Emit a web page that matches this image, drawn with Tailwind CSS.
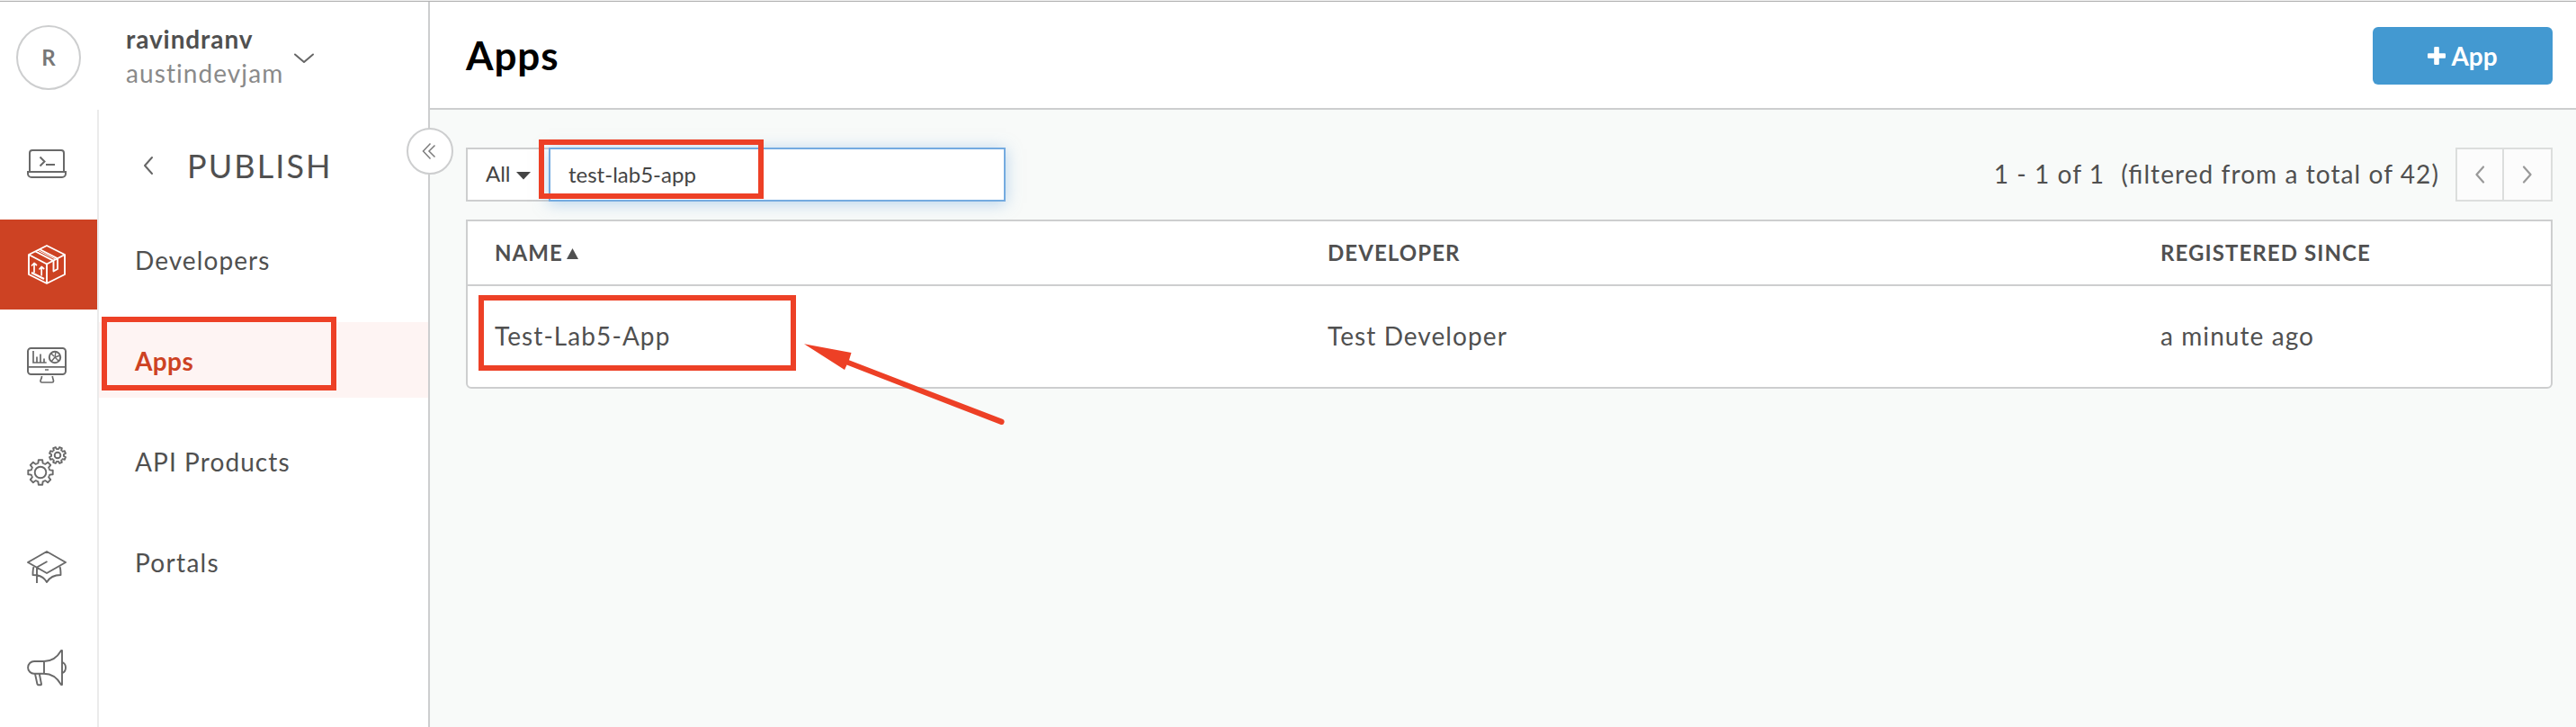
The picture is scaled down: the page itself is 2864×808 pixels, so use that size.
<!DOCTYPE html>
<html lang="en">
<head>
<meta charset="utf-8">
<title>Apps</title>
<script src="https://cdn.jsdelivr.net/npm/@tailwindcss/browser@4"></script>
</head>
<body class="relative flex h-[808px] w-[2864px] flex-col overflow-hidden bg-white font-['Lato',sans-serif] text-[28px] leading-[34px] tracking-[1.08px] text-[#505050]">
  <div class="h-[2px] shrink-0 border-b border-[#b2b2b2] bg-[#f0f0f0]"></div>
  <div class="flex min-h-0 flex-1">

    <!-- Sidebar -->
    <aside class="relative flex w-[478px] shrink-0 flex-col border-r-2 border-[#cdcecf] bg-white">
      <div class="flex h-[120px] shrink-0 items-center pl-[18px]">
        <div class="mt-1 flex size-[72px] items-center justify-center rounded-full border-2 border-[#cdcecf] pb-px text-2xl font-bold tracking-normal text-[#777]">R</div>
        <div class="ml-[50px] leading-[38px]">
          <div class="font-bold tracking-[0.9px]">ravindranv</div>
          <div class="text-[#8a8a8a]">austindevjam</div>
        </div>
        <svg class="mt-[5px] ml-[11px] h-[12px] w-[24px]" viewBox="0 0 24 12" fill="none" stroke="#666" stroke-width="2" stroke-linecap="round" stroke-linejoin="round"><path d="M2 1.500l10 8.500 10-8.500"/></svg>
      </div>

      <div class="flex min-h-0 flex-1">
        <nav class="flex w-[110px] shrink-0 flex-col gap-3 border-r-2 border-[#ebebeb] pt-[10px]">
          <a class="flex h-[100px] shrink-0 items-center pl-[30px]">
            <svg class="size-[44px]" viewBox="0 0 44 44" fill="none" stroke="#696969" stroke-width="2">
              <path d="M3 31V10a3 3 0 0 1 3-3h32a3 3 0 0 1 3 3v21M1 31h42v2a4 4 0 0 1-4 4H5a4 4 0 0 1-4-4zM14.500 14.500l5 5-5 5M21 23h10"/>
            </svg>
          </a>
          <a class="flex h-[100px] w-[108px] shrink-0 items-center bg-[#cd4223] pl-[30px]">
            <svg class="size-[44px]" viewBox="0 0 44 44" fill="none" stroke="#fff" stroke-width="1.900" stroke-linejoin="round">
              <path d="M22 1L42 11v22L22 43 2 33V11zM2 11l20 10.500L42 11M22 21.500V43"/>
              <path d="M9.500 7.500l20 10.300V29.500l4.500-2.500V15.300L14 5" />
              <path d="M12 6.200l19.500 10" stroke-width="1"/>
              <path d="M8 31V21M5 23.500L8 20.500l3 2.500M16.200 34.500V25M13.500 27.500l2.700-3 3 2.500" stroke-width="1.700"/>
              <path d="M5 31l14 7" stroke-width="2.200"/>
            </svg>
          </a>
          <a class="flex h-[100px] shrink-0 items-center pl-[30px]">
            <svg class="size-[44px]" viewBox="0 0 44 44" fill="none" stroke="#696969" stroke-width="2">
              <rect x="1" y="3" width="42" height="29" rx="3.500"/>
              <path d="M1 23.800h42M20 27h4M16.500 34c0 3-1.500 4-1.500 5.500 0 1 .5 1.500 1.500 1.500h11.500c1 0 1.500-.5 1.500-1.500 0-1.500-1-2.500-1.200-5.500" stroke-width="1.700"/>
              <path d="M7 6v13h14.700M11 19v-6.500M15 19V9.500M19 19v-4.500" stroke-width="1.700"/>
              <circle cx="31" cy="13" r="6.200"/>
              <path d="M31 13l1-6M31 13l6-2M31 13l-4 5M31 13l4.500 4.500M30 12l-3.500-3.500" stroke-width="1.400"/>
            </svg>
          </a>
          <a class="flex h-[100px] shrink-0 items-center pl-[30px]">
            <svg class="size-[44px]" viewBox="0 0 44 44" fill="none" stroke="#696969" stroke-width="1.900" stroke-linejoin="round">
              <defs>
                <path id="tooth" d="M-4-9.700L-2.600-10.300-2.200-13.700H2.200L2.600-10.300 4-9.700" vector-effect="non-scaling-stroke"/>
                <g id="gear">
                  <use href="#tooth"/><use href="#tooth" transform="rotate(45)"/><use href="#tooth" transform="rotate(90)"/><use href="#tooth" transform="rotate(135)"/>
                  <use href="#tooth" transform="rotate(180)"/><use href="#tooth" transform="rotate(225)"/><use href="#tooth" transform="rotate(270)"/><use href="#tooth" transform="rotate(315)"/>
                </g>
              </defs>
              <use href="#gear" transform="translate(15 29)"/>
              <circle cx="15" cy="29" r="6.300"/>
              <use href="#gear" transform="translate(34 10) rotate(22.500) scale(.66)"/>
              <circle cx="34" cy="10" r="3.300"/>
            </svg>
          </a>
          <a class="flex h-[100px] shrink-0 items-center pl-[30px]">
            <svg class="size-[44px]" viewBox="0 0 44 44" fill="none" stroke="#696969" stroke-width="1.900" stroke-linejoin="round">
              <path d="M1 17L22 5l21 12-21 12zM22.500 16L11 22.500V40M7.500 22c-.8 2-1 5-1 9 2 0 3 0 4.500.3 5 1 9 4.200 11 7.700 3-5 8-8 15.500-8 0-4 0-7-1-9"/>
            </svg>
          </a>
          <a class="flex h-[100px] shrink-0 items-center pl-[30px]">
            <svg class="size-[44px]" viewBox="0 0 44 44" fill="none" stroke="#696969" stroke-width="1.900" stroke-linejoin="round">
              <path d="M19 15H8a6.900 6.900 0 0 0 0 13.800h11zC27 15 34 10 38 3h1v38h-1C34 34 27 28.800 19 28.800M39.500 16c2 1 3.500 3 3.500 6s-1.500 5-3.500 6M9 29l2.500 11.500c.2.500.5.700 1 .7h2.800c.6 0 .8-.4.700-.9L13.800 29"/>
            </svg>
          </a>
        </nav>

        <nav class="flex flex-1 flex-col">
          <div class="flex h-[124px] shrink-0 items-center pl-[49px] text-4xl leading-[44px] tracking-[2.1px]">
            <svg class="h-[22px] w-[12px]" viewBox="0 0 12 22" fill="none" stroke="#666" stroke-width="2" stroke-linecap="round" stroke-linejoin="round"><path d="M10 2L2 11l8 9"/></svg>
            <span class="ml-[37px]">PUBLISH</span>
          </div>
          <div class="flex flex-col gap-7">
            <a class="flex h-[84px] items-center pt-[2px] pl-10">Developers</a>
            <a class="flex h-[84px] items-center bg-[#fef4f3] pt-[2px] pl-10 font-bold tracking-[0.4px] text-[#cd4223]">Apps</a>
            <a class="flex h-[84px] items-center pt-[2px] pl-10">API Products</a>
            <a class="flex h-[84px] items-center pt-[2px] pl-10 tracking-[1.3px]">Portals</a>
          </div>
        </nav>
      </div>

      <!-- Collapse handle over the sidebar edge -->
      <div class="absolute top-[140px] left-[452px] z-10 flex size-[52px] items-center justify-center rounded-full border-2 border-[#cdcecf] bg-white">
        <svg class="size-[20px]" viewBox="0 0 20 20" fill="none" stroke="#7d7d7d" stroke-width="1.500"><path d="M10.500 1.500L2.500 10l8 8.500M15.500 3.500L9 10l6.500 6.500"/></svg>
      </div>
    </aside>

    <!-- Main -->
    <main class="flex flex-1 flex-col bg-[#f8faf9]">
      <header class="flex h-[120px] shrink-0 items-center justify-between border-b-2 border-[#cdcecf] bg-white pr-[26px] pl-10">
        <h1 class="text-[44px] leading-[52px] font-bold tracking-[0.9px] text-black">Apps</h1>
        <button class="mt-[2px] flex h-[64px] w-[200px] items-center justify-center gap-[6px] rounded-[6px] bg-[#4399d1] font-bold tracking-normal text-white">
          <svg class="size-[20px]" viewBox="0 0 20 20" fill="#fff"><path d="M8.200 0h3.600a1 1 0 0 1 1 1v6.200H19a1 1 0 0 1 1 1v3.600a1 1 0 0 1-1 1h-6.200V19a1 1 0 0 1-1 1H8.200a1 1 0 0 1-1-1v-6.200H1a1 1 0 0 1-1-1V8.200a1 1 0 0 1 1-1h6.200V1a1 1 0 0 1 1-1z"/></svg>
          <span>App</span>
        </button>
      </header>

      <div class="flex flex-col gap-5 pt-[42px] pr-[26px] pl-10">
        <div class="flex h-[60px] items-center justify-between">
          <div class="flex h-full text-2xl leading-[30px] tracking-normal text-[#444]">
            <div class="flex w-[92px] items-center gap-[6px] border-2 border-r-0 border-[#cdcecf] bg-white pl-[20px]">
              <span class="pb-[3px]">All</span>
              <svg class="mt-[2px] h-[9px] w-[16px]" viewBox="0 0 16 9" fill="#444"><path d="M0 0h16L8 8.500z"/></svg>
            </div>
            <div class="flex w-[508px] items-center border-2 border-[#74abe0] bg-white pl-[20px] shadow-[0_2px_16px_rgba(116,171,224,0.5)]">test-lab5-app</div>
          </div>
          <div class="flex h-full items-center">
            <span class="pb-[2px]">1 - 1 of 1</span>
            <span class="mr-[18px] ml-[18px] pb-[2px] [font-feature-settings:'liga'_1]">(filtered from a total of 42)</span>
            <div class="flex h-[60px] w-[108px] border-2 border-[#dcdedd] bg-[#fcfcfc]">
              <div class="flex w-[50px] items-center justify-center"><svg class="h-[20px] w-[12px]" viewBox="0 0 12 20" fill="none" stroke="#999" stroke-width="2.200" stroke-linecap="round" stroke-linejoin="round"><path d="M10 1.500L2.500 10l7.500 8.500"/></svg></div>
              <div class="flex flex-1 items-center justify-center border-l-2 border-[#dcdedd]"><svg class="h-[20px] w-[12px]" viewBox="0 0 12 20" fill="none" stroke="#999" stroke-width="2.200" stroke-linecap="round" stroke-linejoin="round"><path d="M2 1.500L9.500 10 2 18.500"/></svg></div>
            </div>
          </div>
        </div>

        <div class="rounded-b-[6px] border-2 border-[#cdcecf] bg-white">
          <div class="grid h-[72px] grid-cols-[926px_926px_1fr] items-center border-b-2 border-[#cdcecf] text-2xl leading-[30px] font-bold">
            <div class="flex items-center gap-[4px] pl-[30px]">NAME
              <svg class="mt-px h-[12px] w-[13px]" viewBox="0 0 13 12" fill="#505050"><path d="M0 12h13L6.500 0z"/></svg>
            </div>
            <div class="pl-[30px]">DEVELOPER</div>
            <div class="pl-[30px]">REGISTERED SINCE</div>
          </div>
          <div class="grid h-[112px] grid-cols-[926px_926px_1fr] items-center pb-[2px]">
            <div class="pl-[30px]">Test-Lab5-App</div>
            <div class="pl-[30px]">Test Developer</div>
            <div class="pl-[30px]">a minute ago</div>
          </div>
        </div>
      </div>
    </main>
  </div>

  <!-- Annotations drawn over the page -->
  <div class="absolute top-[352px] left-[113px] z-20 h-[82px] w-[261px] border-6 border-[#ed4026]"></div>
  <div class="absolute top-[155px] left-[599px] z-20 h-[66px] w-[250px] border-6 border-[#ed4026]"></div>
  <div class="absolute top-[328px] left-[532px] z-20 h-[84px] w-[353px] border-6 border-[#ed4026]"></div>
  <svg class="absolute top-[370px] left-[880px] z-20 h-[110px] w-[250px]" viewBox="880 370 250 110" fill="#ed4026">
    <path d="M894 382.300L946.500 392l-2.500 8.300L1114.500 465.800a3.200 3.200 0 0 1-2.300 6L941.500 405.500 939 411z"/>
  </svg>
</body>
</html>
